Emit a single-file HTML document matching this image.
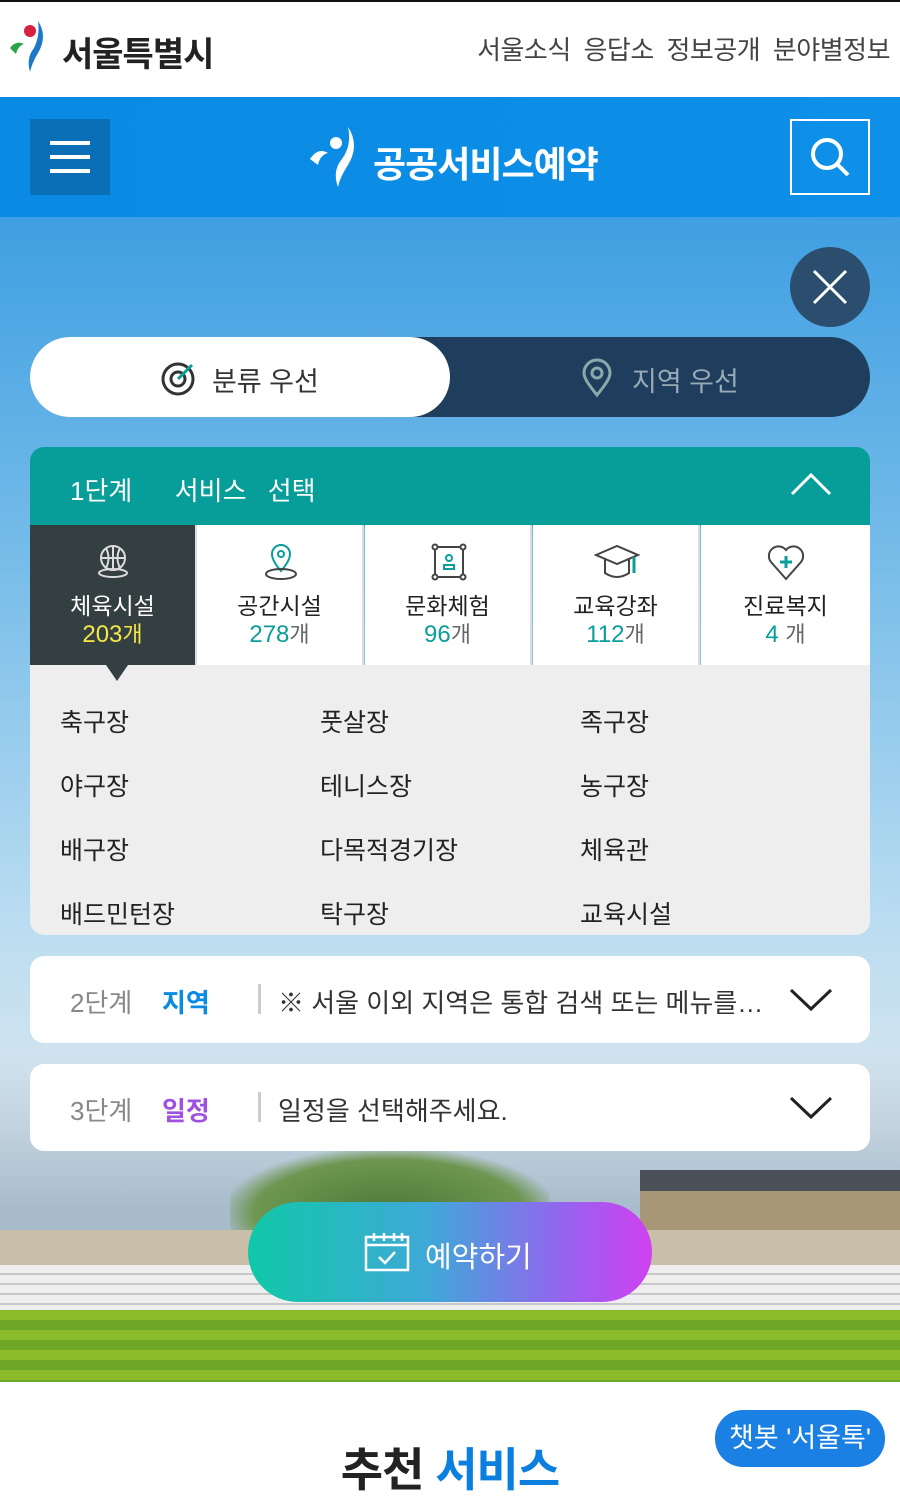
<!DOCTYPE html>
<html><head><meta charset="utf-8"><style>
*{margin:0;padding:0;box-sizing:border-box}
body{width:900px;height:1496px;overflow:hidden;font-family:"Liberation Sans","Noto Sans CJK KR",sans-serif;background:#fff;position:relative}
.abs{position:absolute}
.top{left:0;top:0;width:900px;height:97px;background:#fff;border-top:2px solid #111}
.nav{right:10px;top:30px;font-size:26px;color:#444;letter-spacing:-0.5px;word-spacing:6px}
.blue{left:0;top:97px;width:900px;height:120px;background:linear-gradient(90deg,#0a8ae2,#0e90e8)}
.bg{left:0;top:217px;width:900px;height:1165px;background:linear-gradient(180deg,#3f9fe2 0%,#78bde9 30%,#b9dcf1 60%,#cfe3ef 72%,#c3d3df 78%,#a9bccb 85%,#9fb2c0 100%)}
.trees{left:230px;top:1150px;width:320px;height:90px;background:radial-gradient(ellipse at 50% 70%,#4d7a35,#6e9650 60%,transparent 75%)}
.house{left:640px;top:1170px;width:280px;height:70px;background:linear-gradient(180deg,#4a5058 0 30%,#a89878 30%)}
.wall{left:0;top:1230px;width:900px;height:38px;background:#c9bfa8}
.stand{left:0;top:1265px;width:900px;height:50px;background:repeating-linear-gradient(180deg,#eeeeee 0 8px,#c8c8c8 8px 10px)}
.grass{left:0;top:1310px;width:900px;height:72px;background:repeating-linear-gradient(180deg,#8cbc2c 0 10px,#6ea626 10px 20px)}
.card{background:#fff;border-radius:14px}
.row{font-size:25px;color:#333}
.tab{top:525px;width:167px;height:140px;background:#fff;text-align:center;border-right:2px solid #ddd}
.tab .t{position:absolute;top:62px;width:100%;font-size:23px;color:#222}
.tab .n{position:absolute;top:92px;width:100%;font-size:24px;color:#0a9e9a}
.tab .n span{color:#666;font-size:22px}
.grid div{position:absolute;font-size:25px;color:#222}
</style></head><body>
<div class="abs top"></div>
<svg class="abs" style="left:8px;top:18px" width="50" height="55" viewBox="0 0 50 55"><circle cx="22" cy="13" r="6" fill="#d8213a"/><path d="M2 30 Q8 22 16 26 Q10 28 8 36Z" fill="#2aa347"/><path d="M30 3 Q40 18 30 35 Q24 45 22 54 Q18 40 26 30 Q32 18 30 3Z" fill="#1d78c8"/></svg>
<div class="abs" style="left:62px;top:27px;font-size:34px;font-weight:bold;color:#222;letter-spacing:-1px">서울특별시</div>
<div class="abs nav">서울소식 응답소 정보공개 분야별정보</div>
<div class="abs blue"></div>
<div class="abs" style="left:30px;top:119px;width:80px;height:76px;background:#0b6fb8"></div>
<div class="abs" style="left:50px;top:141px;width:40px;height:4px;background:#fff;box-shadow:0 14px 0 #fff,0 28px 0 #fff"></div>
<svg class="abs" style="left:308px;top:125px" width="60" height="64" viewBox="0 0 60 64"><circle cx="28" cy="18" r="6" fill="#fff"/><path d="M2 34 Q10 22 20 28 Q12 30 10 40Z" fill="#fff"/><path d="M40 2 Q52 20 40 40 Q32 52 30 62 Q24 46 34 34 Q44 20 40 2Z" fill="#fff"/></svg>
<div class="abs" style="left:373px;top:136px;font-size:36px;font-weight:bold;color:#fff;letter-spacing:-1px">공공서비스예약</div>
<div class="abs" style="left:790px;top:119px;width:80px;height:76px;border:2px solid #fff"></div>
<svg class="abs" style="left:806px;top:133px" width="48" height="48" viewBox="0 0 48 48"><circle cx="21" cy="21" r="14" fill="none" stroke="#fff" stroke-width="4"/><path d="M31 31 L42 42" stroke="#fff" stroke-width="4"/></svg>
<div class="abs bg"></div>
<div class="abs trees"></div>
<div class="abs house"></div>
<div class="abs wall"></div>
<div class="abs stand"></div>
<div class="abs grass"></div>
<div class="abs" style="left:790px;top:247px;width:80px;height:80px;border-radius:50%;background:#2b4e6e"></div>
<svg class="abs" style="left:810px;top:267px" width="40" height="40"><path d="M4 4L36 36M36 4L4 36" stroke="#fff" stroke-width="3"/></svg>
<div class="abs" style="left:30px;top:337px;width:840px;height:80px;border-radius:40px;background:#1f3d5c"></div>
<div class="abs" style="left:30px;top:337px;width:420px;height:80px;border-radius:40px;background:#fff"></div>
<svg class="abs" style="left:160px;top:359px" width="38" height="38" viewBox="0 0 38 38"><circle cx="18" cy="20" r="15" fill="none" stroke="#333" stroke-width="3"/><circle cx="18" cy="20" r="7" fill="none" stroke="#333" stroke-width="3"/><path d="M18 20L32 6" stroke="#0a9e9a" stroke-width="3"/></svg>
<div class="abs row" style="left:212px;top:360px;font-size:27px">분류 우선</div>
<svg class="abs" style="left:580px;top:358px" width="34" height="40" viewBox="0 0 34 40"><path d="M17 37C8 26 4 20 4 15a13 13 0 0126 0c0 5-4 11-13 22z" fill="none" stroke="#8aa" stroke-width="3"/><circle cx="17" cy="15" r="5" fill="none" stroke="#8aa" stroke-width="3"/></svg>
<div class="abs" style="left:632px;top:360px;font-size:27px;color:#99a9b8">지역 우선</div>
<div class="abs" style="left:30px;top:447px;width:840px;height:79px;background:#079e9a;border-radius:14px 14px 0 0"></div>
<div class="abs" style="left:70px;top:471px;font-size:26px;color:#fff;word-spacing:14px">1단계 &nbsp;서비스 선택</div>
<svg class="abs" style="left:790px;top:470px" width="42" height="28"><path d="M2 24L21 5L40 24" fill="none" stroke="#fff" stroke-width="3"/></svg>
<div class="abs tab" style="left:30px;background:#343f42"><div class="t" style="color:#fff">체육시설</div><div class="n" style="color:#f5e64a">203<span style="color:#f5e64a">개</span></div></div>
<div class="abs tab" style="left:197px"><div class="t">공간시설</div><div class="n">278<span>개</span></div></div>
<div class="abs tab" style="left:365px"><div class="t">문화체험</div><div class="n">96<span>개</span></div></div>
<div class="abs tab" style="left:533px"><div class="t">교육강좌</div><div class="n">112<span>개</span></div></div>
<div class="abs tab" style="left:701px;width:169px;border:none"><div class="t">진료복지</div><div class="n">4 <span>개</span></div></div>
<svg class="abs" style="left:95px;top:543px" width="36" height="36" viewBox="0 0 36 36" fill="none" stroke="#ddd" stroke-width="2"><circle cx="18" cy="15" r="12"/><path d="M6 15h24M18 3v24M11 5q5 10 0 20M25 5q-5 10 0 20"/><ellipse cx="18" cy="30" rx="14" ry="4"/></svg>
<svg class="abs" style="left:263px;top:543px" width="36" height="38" viewBox="0 0 36 38" fill="none" stroke-width="2"><path d="M18 28C11 20 9 15 9 11a9 9 0 0118 0c0 4-2 9-9 17z" stroke="#0a9e9a"/><circle cx="18" cy="11" r="3" stroke="#0a9e9a"/><ellipse cx="18" cy="31" rx="15" ry="5" stroke="#444"/></svg>
<svg class="abs" style="left:431px;top:543px" width="36" height="38" viewBox="0 0 36 38" fill="none" stroke="#444" stroke-width="2"><rect x="4" y="4" width="28" height="30"/><circle cx="4" cy="4" r="2.5" fill="#fff"/><circle cx="32" cy="4" r="2.5" fill="#fff"/><circle cx="4" cy="34" r="2.5" fill="#fff"/><circle cx="32" cy="34" r="2.5" fill="#fff"/><circle cx="18" cy="15" r="3" stroke="#0a9e9a"/><path d="M13 26v-4h10v4z" stroke="#0a9e9a"/></svg>
<svg class="abs" style="left:594px;top:543px" width="46" height="40" viewBox="0 0 46 40" fill="none" stroke="#444" stroke-width="2"><path d="M2 12L23 3L44 12L23 21Z"/><path d="M11 16v14q12 8 24 0V16"/><path d="M40 14v16" stroke="#0a9e9a" stroke-width="3"/></svg>
<svg class="abs" style="left:766px;top:543px" width="40" height="40" viewBox="0 0 40 40" fill="none" stroke-width="2"><path d="M20 36L5 19A9 9 0 0120 7A9 9 0 0135 19Z" stroke="#444"/><path d="M20 13v12M14 19h12" stroke="#0a9e9a" stroke-width="3"/></svg>
<div class="abs" style="left:30px;top:665px;width:840px;height:270px;background:#eee;border-radius:0 0 14px 14px"></div>
<div class="abs" style="left:106px;top:665px;width:0;height:0;border-left:11px solid transparent;border-right:11px solid transparent;border-top:16px solid #343f42"></div>
<div class="grid">
<div style="left:60px;top:703px">축구장</div><div style="left:320px;top:703px">풋살장</div><div style="left:580px;top:703px">족구장</div>
<div style="left:60px;top:767px">야구장</div><div style="left:320px;top:767px">테니스장</div><div style="left:580px;top:767px">농구장</div>
<div style="left:60px;top:831px">배구장</div><div style="left:320px;top:831px">다목적경기장</div><div style="left:580px;top:831px">체육관</div>
<div style="left:60px;top:895px">배드민턴장</div><div style="left:320px;top:895px">탁구장</div><div style="left:580px;top:895px">교육시설</div>
</div>
<div class="abs card" style="left:30px;top:956px;width:840px;height:87px"></div>
<div class="abs" style="left:70px;top:983px;font-size:26px;color:#888">2단계</div>
<div class="abs" style="left:162px;top:983px;font-size:26px;color:#0a8ae2;font-weight:bold">지역</div>
<div class="abs" style="left:258px;top:984px;width:3px;height:30px;background:#ccc"></div>
<div class="abs" style="left:278px;top:983px;font-size:26px;color:#333;width:500px;white-space:nowrap;overflow:hidden">※ 서울 이외 지역은 통합 검색 또는 메뉴를…</div>
<svg class="abs" style="left:789px;top:986px" width="44" height="28"><path d="M2 4L22 23L42 4" fill="none" stroke="#222" stroke-width="3"/></svg>
<div class="abs card" style="left:30px;top:1064px;width:840px;height:87px"></div>
<div class="abs" style="left:70px;top:1091px;font-size:26px;color:#888">3단계</div>
<div class="abs" style="left:162px;top:1091px;font-size:26px;color:#a050e0;font-weight:bold">일정</div>
<div class="abs" style="left:258px;top:1092px;width:3px;height:30px;background:#ccc"></div>
<div class="abs" style="left:278px;top:1091px;font-size:26px;color:#333">일정을 선택해주세요.</div>
<svg class="abs" style="left:789px;top:1094px" width="44" height="28"><path d="M2 4L22 23L42 4" fill="none" stroke="#222" stroke-width="3"/></svg>
<div class="abs" style="left:248px;top:1202px;width:404px;height:100px;border-radius:50px;background:linear-gradient(90deg,#10c8a8,#3fa8d8 45%,#9a60f0 80%,#d040f0)"></div>
<svg class="abs" style="left:364px;top:1232px" width="46" height="40" viewBox="0 0 46 40" fill="none" stroke="#fff" stroke-width="2.5"><rect x="2" y="5" width="42" height="33"/><path d="M2 13h42M10 1v8M20 1v8M30 1v8M38 1v8M15 25l6 6l10-11"/></svg>
<div class="abs" style="left:425px;top:1234px;font-size:29px;color:#fff">예약하기</div>
<div class="abs" style="left:0;top:1382px;width:900px;height:114px;background:#fff"></div>
<div class="abs" style="left:0;top:1434px;width:900px;text-align:center;font-size:46px;font-weight:bold;color:#222;letter-spacing:-1px">추천 <span style="color:#0a7fe0">서비스</span></div>
<div class="abs" style="left:715px;top:1410px;width:170px;height:57px;border-radius:28px;background:#1a80e4;color:#fff;font-size:27px;text-align:center;line-height:57px">챗봇 '서울톡'</div>
</body></html>
